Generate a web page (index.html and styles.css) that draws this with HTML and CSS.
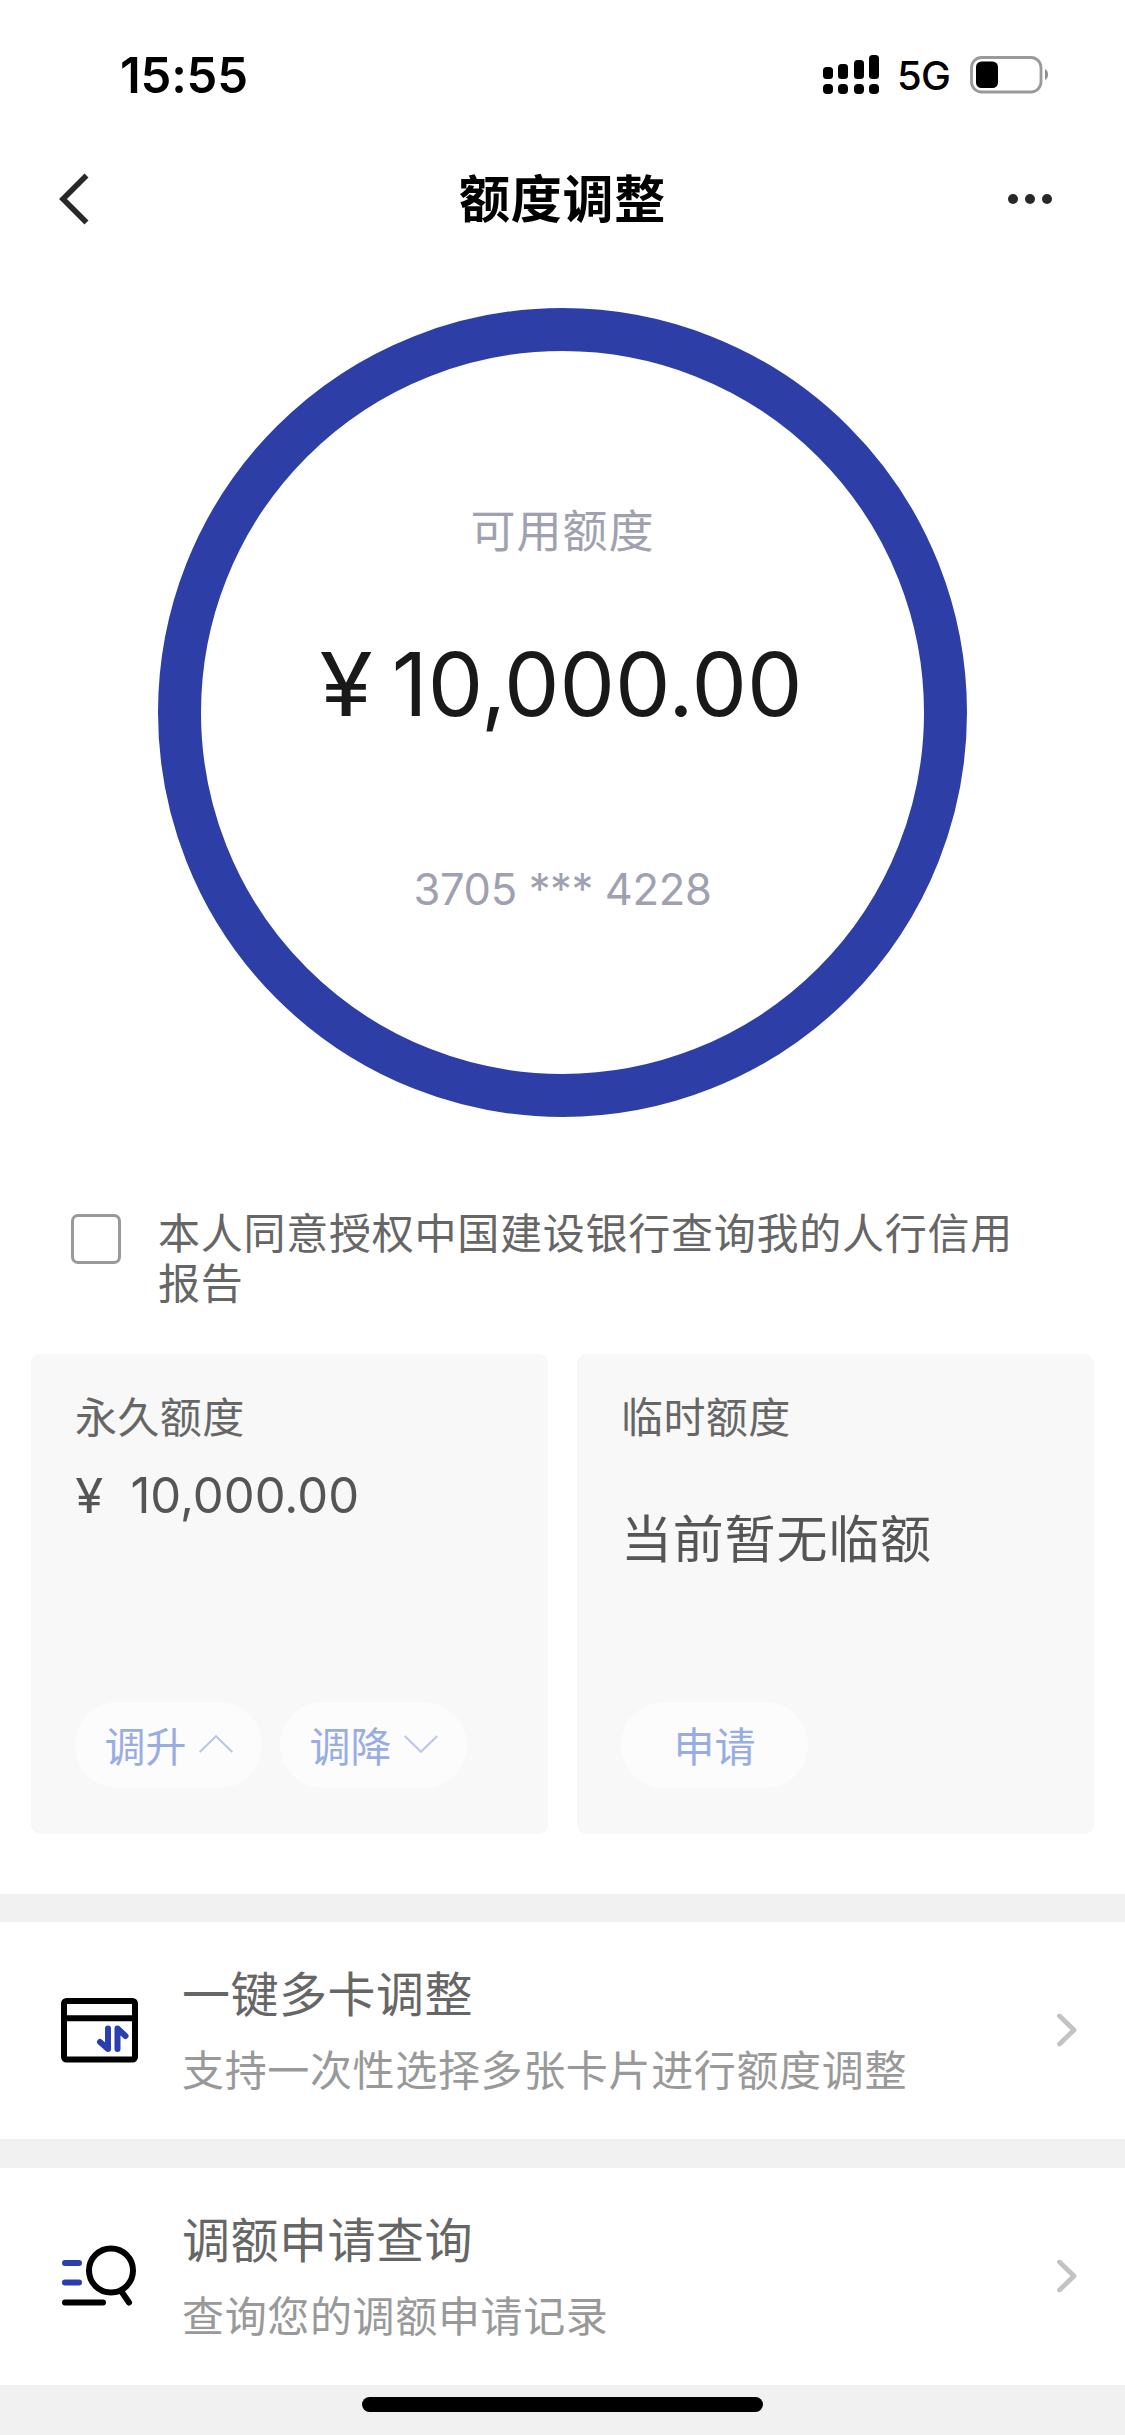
FILE: index.html
```html
<!DOCTYPE html>
<html lang="zh-CN">
<head>
<meta charset="utf-8">
<title>额度调整</title>
<link rel="stylesheet" href="styles.css">
</head>
<body>
<div class="screen">
  <header class="status">
    <span class="time">15:55</span>
    <div class="indicators">
      <svg class="signal" width="56" height="39" viewBox="0 0 56 39">
        <rect x="0" y="12" width="10" height="12" rx="3.5"/><rect x="15" y="9" width="10" height="15" rx="3.5"/>
        <rect x="31" y="5" width="10" height="19" rx="3.5"/><rect x="46" y="0" width="10" height="24" rx="3.5"/>
        <rect x="0" y="29" width="10" height="10" rx="4"/><rect x="15" y="29" width="10" height="10" rx="4"/>
        <rect x="31" y="29" width="10" height="10" rx="4"/><rect x="46" y="29" width="10" height="10" rx="4"/>
      </svg>
      <span class="network">5G</span>
      <svg class="battery" width="80" height="38" viewBox="0 0 80 38">
        <rect x="1.5" y="1.5" width="69.5" height="34.5" rx="10" fill="none" stroke="#9a9a9a" stroke-width="2.8"/>
        <rect x="6" y="5.5" width="22" height="26.5" rx="5.5"/>
        <path d="M75 13 a5 6 0 0 1 0 11 z" fill="#8e8e8e"/>
      </svg>
    </div>
  </header>

  <nav class="nav">
    <svg width="46" height="54" viewBox="0 0 46 54"><path d="M28.500 3.500 L5 27 L28.500 50.500" fill="none" stroke="#27282a" stroke-width="5.600"/></svg>
    <h1 class="nav-title">额度调整</h1>
    <svg width="46" height="12" viewBox="0 0 46 12" fill="#27282a"><circle cx="6" cy="6" r="5"/><circle cx="23" cy="6" r="5"/><circle cx="40" cy="6" r="5"/></svg>
  </nav>

  <section class="ring">
    <span class="ring-label">可用额度</span>
    <div class="ring-amount"><span class="yen">¥</span><span>10,000.00</span></div>
    <span class="ring-card">3705 *** 4228</span>
  </section>

  <label class="consent">
    <span class="checkbox"></span>
    <span class="consent-text">本人同意授权中国建设银行查询我的人行信用<br>报告</span>
  </label>

  <section class="cards">
    <article class="card">
      <h2 class="card-title">永久额度</h2>
      <div class="card-amount"><span class="yen">¥</span><span>10,000.00</span></div>
      <div class="actions">
        <button class="pill">调升<svg width="34" height="18" viewBox="0 0 34 18"><path d="M.7 17 L17 1.200 L33.300 17"/></svg></button>
        <button class="pill">调降<svg width="34" height="18" viewBox="0 0 34 18"><path d="M.7 1 L17 16.800 L33.300 1"/></svg></button>
      </div>
    </article>
    <article class="card">
      <h2 class="card-title">临时额度</h2>
      <div class="card-note">当前暂无临额</div>
      <div class="actions"><button class="pill">申请</button></div>
    </article>
  </section>

  <section class="list">
    <a class="row">
      <svg class="row-icon" width="80" height="72" viewBox="0 0 80 72" fill="none" stroke-linecap="round" stroke-linejoin="round" stroke-width="6">
        <rect x="5" y="7" width="71" height="58.500" rx="2.500" stroke="#000"/>
        <path d="M5 24.300 H76" stroke="#000"/>
        <path d="M49 34.500 V55 L41 48 M58.500 55 V34.500 L66.500 42" stroke="#2a3eb1"/>
      </svg>
      <div class="row-text"><span class="row-title">一键多卡调整</span><span class="row-sub">支持一次性选择多张卡片进行额度调整</span></div>
      <svg class="chevron" width="22" height="34" viewBox="0 0 22 34"><path d="M3.500 3 L18 17 L3.500 31"/></svg>
    </a>
    <a class="row">
      <svg class="row-icon" width="80" height="72" viewBox="0 0 80 72" fill="none" stroke-linecap="round" stroke-width="6">
        <circle cx="52" cy="30.500" r="22" stroke="#000"/>
        <path d="M63.500 53 L70 62.500 M6 62.500 H44" stroke="#000"/>
        <path d="M6 23 H20 M6 42.500 H20" stroke="#2a3eb1"/>
      </svg>
      <div class="row-text"><span class="row-title">调额申请查询</span><span class="row-sub">查询您的调额申请记录</span></div>
      <svg class="chevron" width="22" height="34" viewBox="0 0 22 34"><path d="M3.500 3 L18 17 L3.500 31"/></svg>
    </a>
  </section>

  <footer class="home"><span class="home-bar"></span></footer>
</div>
</body>
</html>
```
FILE: styles.css
```css
* { box-sizing: border-box; margin: 0; padding: 0; }
body {
  background: #fff;
  font-family: Inter, "Noto Sans CJK SC", sans-serif;
  font-weight: 400;
}
svg { display: block; flex: none; }
.screen { width: 1125px; height: 2435px; display: flex; flex-direction: column; overflow: hidden; }

.status { height: 150px; padding: 0 75px 0 120px; display: flex; align-items: center; justify-content: space-between; }
.time { font-size: 49px; font-weight: 600; line-height: 60px; padding-top: 2px; letter-spacing: -0.2px; }
.indicators { display: flex; align-items: center; }
.signal { margin-top: -1px; }
.network { font-size: 40px; font-weight: 500; line-height: 48px; margin: 2px 20px 0 18px; width: 53px; white-space: nowrap; letter-spacing: -0.8px; }

.nav { height: 98px; padding: 0 72px 0 58px; display: flex; align-items: center; justify-content: space-between; }
.nav-title { font-size: 51px; font-weight: 700; line-height: 72px; padding: 2px 0 0 14px; letter-spacing: 0.8px; }

.ring {
  width: 809px; height: 809px; margin: 60px auto 0; padding-top: 146px;
  border: 43px solid #2d3fa6; border-radius: 50%;
  display: flex; flex-direction: column; align-items: center;
}
.ring-label { font-size: 45px; line-height: 70px; letter-spacing: 1px; color: #9fa1b0; }
.ring-amount { display: flex; gap: 21px; margin-top: 72px; font-size: 88px; line-height: 90px; color: #191919; }
.ring-amount .yen { transform: scaleX(1.1); }
.ring-card { margin-top: 132px; font-size: 43.5px; line-height: 56px; letter-spacing: -0.35px; color: #9fa1b0; }

.consent { display: flex; height: 237px; padding: 97px 0 0 71px; gap: 37px; }
.checkbox { width: 50px; height: 50px; border: 3px solid #999; border-radius: 7px; }
.consent-text { font-size: 42px; line-height: 50px; letter-spacing: 0.75px; color: #666; margin-top: -5px; }

.cards { display: grid; grid-template-columns: 517px 517px; column-gap: 29px; padding: 0 31px; height: 540px; align-items: start; }
.card { height: 480px; padding: 34px 44px 46px; border-radius: 9px; background: #f8f8f8; display: flex; flex-direction: column; }
.card-title { font-size: 42px; font-weight: 400; line-height: 60px; letter-spacing: 0.4px; color: #666; }
.card-amount { display: flex; gap: 28px; margin-top: 18px; font-size: 49px; line-height: 60px; color: #555; }
.card-amount .yen { font-size: 48px; margin-left: 1px; transform: scaleX(1.06); }
.card-note { margin-top: 60px; font-size: 51px; line-height: 64px; letter-spacing: 0.8px; color: #555; }
.actions { display: flex; gap: 18px; margin-top: auto; }
.pill {
  width: 187px; height: 86px; border: 0; border-radius: 43px; background: #fcfcfc; padding-bottom: 2px;
  font-family: inherit; font-size: 41px; color: #99ade2;
  display: flex; align-items: center; justify-content: center; gap: 12px;
}
.pill path { fill: none; stroke: #b9c7ec; stroke-width: 2; }

.list { background: #f1f1f1; padding-top: 28px; display: flex; flex-direction: column; gap: 29px; }
.row { height: 217px; padding: 0 47px 0 59px; background: #fff; display: flex; align-items: center; }
.row-icon, .chevron { margin-bottom: 2px; }
.row-text { flex: 1; margin: 3px 0 0 43px; display: flex; flex-direction: column; gap: 14px; }
.row-title { font-size: 48px; line-height: 64px; letter-spacing: 0.5px; color: #666; }
.row-sub { font-size: 42px; line-height: 60px; letter-spacing: 0.65px; color: #999; }
.chevron path { fill: none; stroke: #c3c3c3; stroke-width: 4.8; stroke-linecap: round; stroke-linejoin: round; }

.home { flex: 1; background: #f1f1f1; display: flex; justify-content: center; padding-top: 12px; }
.home-bar { width: 401px; height: 15px; border-radius: 8px; background: #000; }
```
